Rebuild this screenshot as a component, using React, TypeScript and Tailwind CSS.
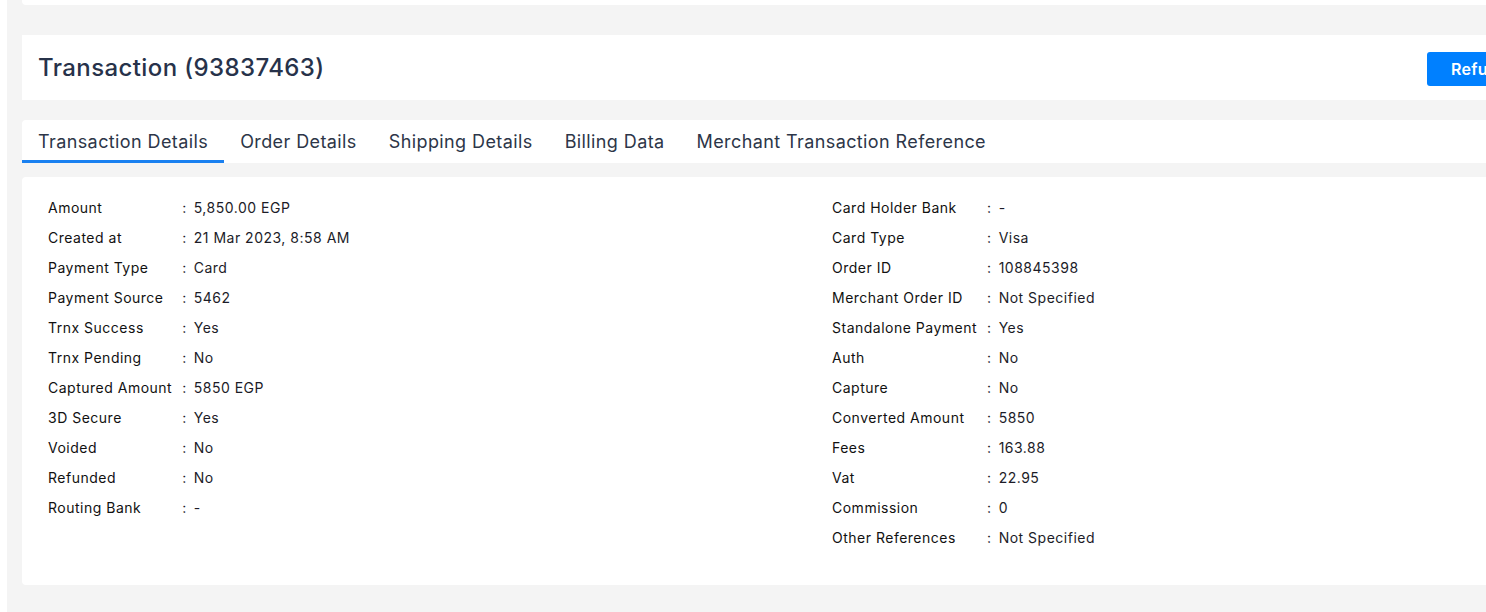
import React from 'react';

const LEFT: [string, string][] = [
  ['Amount', '5,850.00 EGP'],
  ['Created at', '21 Mar 2023, 8:58 AM'],
  ['Payment Type', 'Card'],
  ['Payment Source', '5462'],
  ['Trnx Success', 'Yes'],
  ['Trnx Pending', 'No'],
  ['Captured Amount', '5850 EGP'],
  ['3D Secure', 'Yes'],
  ['Voided', 'No'],
  ['Refunded', 'No'],
  ['Routing Bank', '-'],
];

const RIGHT: [string, string][] = [
  ['Card Holder Bank', '-'],
  ['Card Type', 'Visa'],
  ['Order ID', '108845398'],
  ['Merchant Order ID', 'Not Specified'],
  ['Standalone Payment', 'Yes'],
  ['Auth', 'No'],
  ['Capture', 'No'],
  ['Converted Amount', '5850'],
  ['Fees', '163.88'],
  ['Vat', '22.95'],
  ['Commission', '0'],
  ['Other References', 'Not Specified'],
];

const TABS = ['Transaction Details', 'Order Details', 'Shipping Details', 'Billing Data', 'Merchant Transaction Reference'];

function InfoList({ rows }: { rows: [string, string][] }) {
  return (
    <div className="grid grid-cols-[max-content_1fr] content-start tracking-[0.5px]">
      {rows.map(([label, value]) => (
        <React.Fragment key={label}>
          <div className="h-[30px] flex items-center pr-[10px] text-[#111]">{label}</div>
          <div className="h-[30px] flex items-center text-[#1c1c28]">
            <span className="mr-[7px]">:</span>
            {value}
          </div>
        </React.Fragment>
      ))}
    </div>
  );
}

export default function App() {
  return (
    <div
      className="flex w-[1486px] h-[612px] overflow-hidden bg-white"
      style={{ fontFamily: 'Inter, "Noto Sans", sans-serif' }}
    >
      <div className="w-[7px] shrink-0 bg-white" />
      <div className="flex-1 bg-[#f4f4f4] pl-[15px] overflow-hidden">
        <div className="w-[1600px]">
          <div className="h-[5px] bg-white rounded-b-[4px]" />

          <div className="mt-[30px] h-[65px] w-[1531px] bg-white flex items-center justify-between pl-[16px] pr-[16px]">
            <h1 className="text-[24px] font-medium text-[#27324a] tracking-[0.4px]">Transaction (93837463)</h1>
            <button className="h-[34px] w-[110px] mt-[2px] rounded-[3px] bg-[#0080ff] text-white text-[16px] font-semibold tracking-[0.3px] pl-[24px] text-left">
              Refund
            </button>
          </div>

          <div className="mt-[20px] h-[43px] bg-white rounded-t-[4px] flex">
            {TABS.map((t, i) => (
              <div
                key={t}
                className={`px-[16px] h-full flex items-center text-[18px] tracking-[0.4px] text-[#2d3648] border-b-[3px] ${
                  i === 0 ? 'border-[#1a80f0]' : 'border-transparent'
                }`}
              >
                <span className="pt-[3px]">{t}</span>
              </div>
            ))}
          </div>

          <div className="mt-[14px] h-[408px] bg-white rounded-[4px] px-[26px] pt-[15px] grid grid-cols-[784px_1fr] text-[14px]">
            <InfoList rows={LEFT} />
            <InfoList rows={RIGHT} />
          </div>
        </div>
      </div>
    </div>
  );
}
